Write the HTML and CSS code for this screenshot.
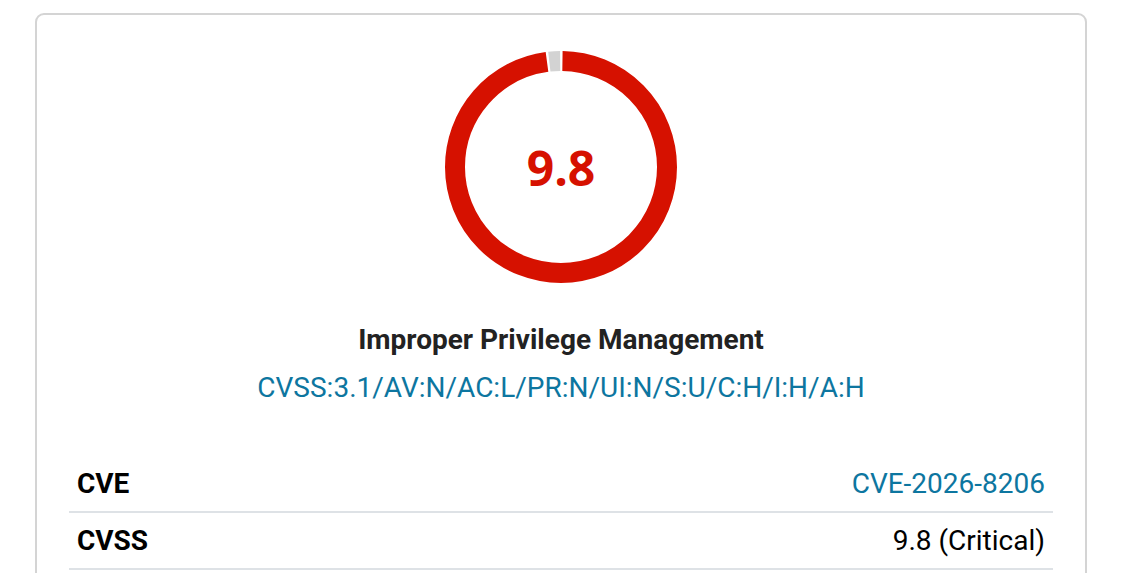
FILE: index.html
```
<!DOCTYPE html>
<html lang="en">
  <head>
    <meta charset="UTF-8" />
    <meta name="viewport" content="width=device-width, initial-scale=1.0" />
    <title>CVE-2026-8206</title>

    <link rel="stylesheet" href="styles.css">
  </head>
  <body>
    <div class="card">
      <div class="score">
        <svg class="donut" width="232" height="232" viewBox="0 0 232 232">
          <circle class="arc arc-red" cx="116" cy="116" r="106" />
          <circle class="arc arc-grey" cx="116" cy="116" r="106" />
        </svg>
        <div class="score-value">9.8</div>
      </div>

      <h2 class="title">Improper Privilege Management</h2>
      <div class="vector">CVSS:3.1/AV:N/AC:L/PR:N/UI:N/S:U/C:H/I:H/A:H</div>

      <table class="info">
        <tr>
          <th>CVE</th>
          <td><a href="#">CVE-2026-8206</a></td>
        </tr>
        <tr>
          <th>CVSS</th>
          <td>9.8 (Critical)</td>
        </tr>
      </table>
    </div>
  </body>
</html>
```

FILE: styles.css
```
body {
  margin: 0;
  font-family: Roboto, "Liberation Sans", sans-serif;
  color: #212529;
  background: #fff;
}

.card {
  margin: 13px 36px 0 35px;
  padding: 36px 32px 32px;
  border: 2px solid #d4d4d4;
  border-radius: 9px;
}

.score {
  position: relative;
  width: 232px;
  height: 232px;
  margin: 0 auto;
}

.donut {
  display: block;
  transform: rotate(-90deg);
}

.arc {
  fill: none;
  stroke-width: 20;
}

.arc-red {
  stroke: #d61100;
  stroke-dasharray: 649.7 16.3;
  stroke-dashoffset: -1.5;
}

.arc-grey {
  stroke: #d3d3d3;
  stroke-dasharray: 11 655;
  stroke-dashoffset: -653.5;
}

.score-value {
  position: absolute;
  top: 0;
  left: 0;
  right: 0;
  bottom: 0;
  display: flex;
  align-items: center;
  justify-content: center;
  font-family: "Open Sans", sans-serif;
  font-weight: 700;
  font-size: 48px;
  color: #d61100;
}

.title {
  margin: 40px 0 0;
  text-align: center;
  font-size: 28px;
  line-height: 34px;
  font-weight: 700;
  color: #222;
}

.vector {
  margin-top: 14px;
  text-align: center;
  font-size: 28px;
  line-height: 34px;
  color: #0d76a0;
}

.info {
  width: 100%;
  margin-top: 51px;
  border-collapse: collapse;
  font-size: 28px;
  line-height: 35px;
}

.info th,
.info td {
  padding: 10px 8px 10px;
  border-bottom: 2px solid #dee2e6;
}

.info th {
  text-align: left;
  font-weight: 700;
  color: #000;
}

.info td {
  text-align: right;
  color: #000;
}

.info a {
  color: #0d76a0;
  text-decoration: none;
}
```
